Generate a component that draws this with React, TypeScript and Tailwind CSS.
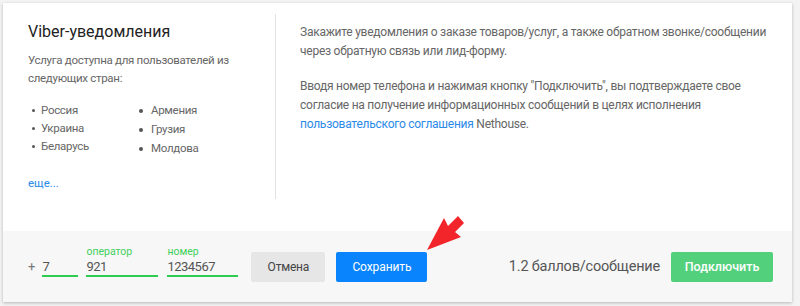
import React from "react";

const Arrow = () => (
  <svg
    className="absolute left-[420px] top-[212px]"
    width="50"
    height="42"
    viewBox="0 0 50 42"
  >
    <polygon
      points="7,38 24,6 28,14 38,4 44,11 35,20 41,25"
      fill="#f2262a"
    />
  </svg>
);

const Field = ({ label, value, w }: { label: string; value: string; w: string }) => (
  <div className={`flex flex-col ${w}`}>
    <span className="h-[12px] text-[10.5px] leading-[12px] text-[#3fcf5c]">{label}</span>
    <span className="text-[13px] tracking-[-0.5px] leading-[17px] text-[#555] border-b-2 border-[#2ecc50]">
      {value}
    </span>
  </div>
);

export default function App() {
  return (
    <div
      className="relative w-[800px] h-[306px] bg-[#f3f3f3] pt-[3px] pl-[3px] pr-[8px] pb-[4px]"
      style={{ fontFamily: "Roboto, 'Liberation Sans', sans-serif" }}
    >
      <div className="w-full h-full bg-white shadow-[0_1px_3px_rgba(0,0,0,0.25)] flex flex-col">
        <div className="flex h-[228px]">
          <div className="w-[272px] pl-[25px] pt-[17px]">
            <h2 className="text-[16px] leading-[24px] text-[#222]">
              Viber-уведомления
            </h2>
            <p className="mt-[7px] text-[11.5px] tracking-[-0.3px] leading-[18px] text-[#666]">
              Услуга доступна для пользователей из
              <br />
              следующих стран:
            </p>
            <div className="flex items-start mt-[14px] text-[11.5px] tracking-[-0.3px] text-[#666]">
              <ul className="w-[111px] pl-[4px] leading-[18px]">
                {["Россия", "Украина", "Беларусь"].map((c) => (
                  <li key={c} className="flex items-center">
                    <span className="w-[3px] h-[3px] rounded-full bg-[#555] mr-[6px]" />
                    {c}
                  </li>
                ))}
              </ul>
              <ul className="leading-[19px]">
                {["Армения", "Грузия", "Молдова"].map((c) => (
                  <li key={c} className="flex items-center">
                    <span className="w-[4px] h-[4px] rounded-full bg-[#555] mr-[8px]" />
                    {c}
                  </li>
                ))}
              </ul>
            </div>
            <a className="block mt-[16px] text-[11.5px] leading-[18px] text-[#2b8ae8]">еще...</a>
          </div>
          <div className="w-px bg-[#e2e2e2] mt-[11px] h-[185px]" />
          <div className="flex-1 pl-[24px] pt-[20px] text-[12px] tracking-[-0.25px] leading-[19px] text-[#666] whitespace-nowrap">
            <p>
              Закажите уведомления о заказе товаров/услуг, а также обратном звонке/сообщении
              <br />
              через обратную связь или лид-форму.
            </p>
            <p className="mt-[16px]">
              Вводя номер телефона и нажимая кнопку "Подключить", вы подтверждаете свое
              <br />
              согласие на получение информационных сообщений в целях исполнения
              <br />
              <span className="text-[#2b8ae8]">пользовательского соглашения</span> Nethouse.
            </p>
          </div>
        </div>
        <div className="flex-1 bg-[#f7f7f7] flex items-start pt-[15px] pl-[25px] pr-[19px]">
          <span className="text-[13px] leading-[17px] text-[#777] mt-[12px] mr-[7px]">+</span>
          <Field label="" value="7" w="w-[36px] mr-[8px]" />
          <Field label="оператор" value="921" w="w-[72px] mr-[9px]" />
          <Field label="номер" value="1234567" w="w-[71px] mr-[13px]" />
          <button className="mt-[6px] w-[74px] h-[30px] bg-[#e6e6e6] rounded-[2px] text-[12px] tracking-[-0.2px] text-[#444] mr-[11px]">
            Отмена
          </button>
          <button className="mt-[6px] w-[91px] h-[30px] bg-[#0a84fc] rounded-[2px] text-[12px] tracking-[-0.1px] text-white">
            Сохранить
          </button>
          <span className="ml-auto mt-[11px] text-[14.5px] leading-[20px] tracking-[-0.2px] text-[#555] mr-[11px]">
            1.2 баллов/сообщение
          </span>
          <button className="mt-[6px] w-[102px] h-[30px] bg-[#53d07c] rounded-[2px] text-[12.5px] font-medium text-white">
            Подключить
          </button>
        </div>
      </div>
      <Arrow />
    </div>
  );
}
